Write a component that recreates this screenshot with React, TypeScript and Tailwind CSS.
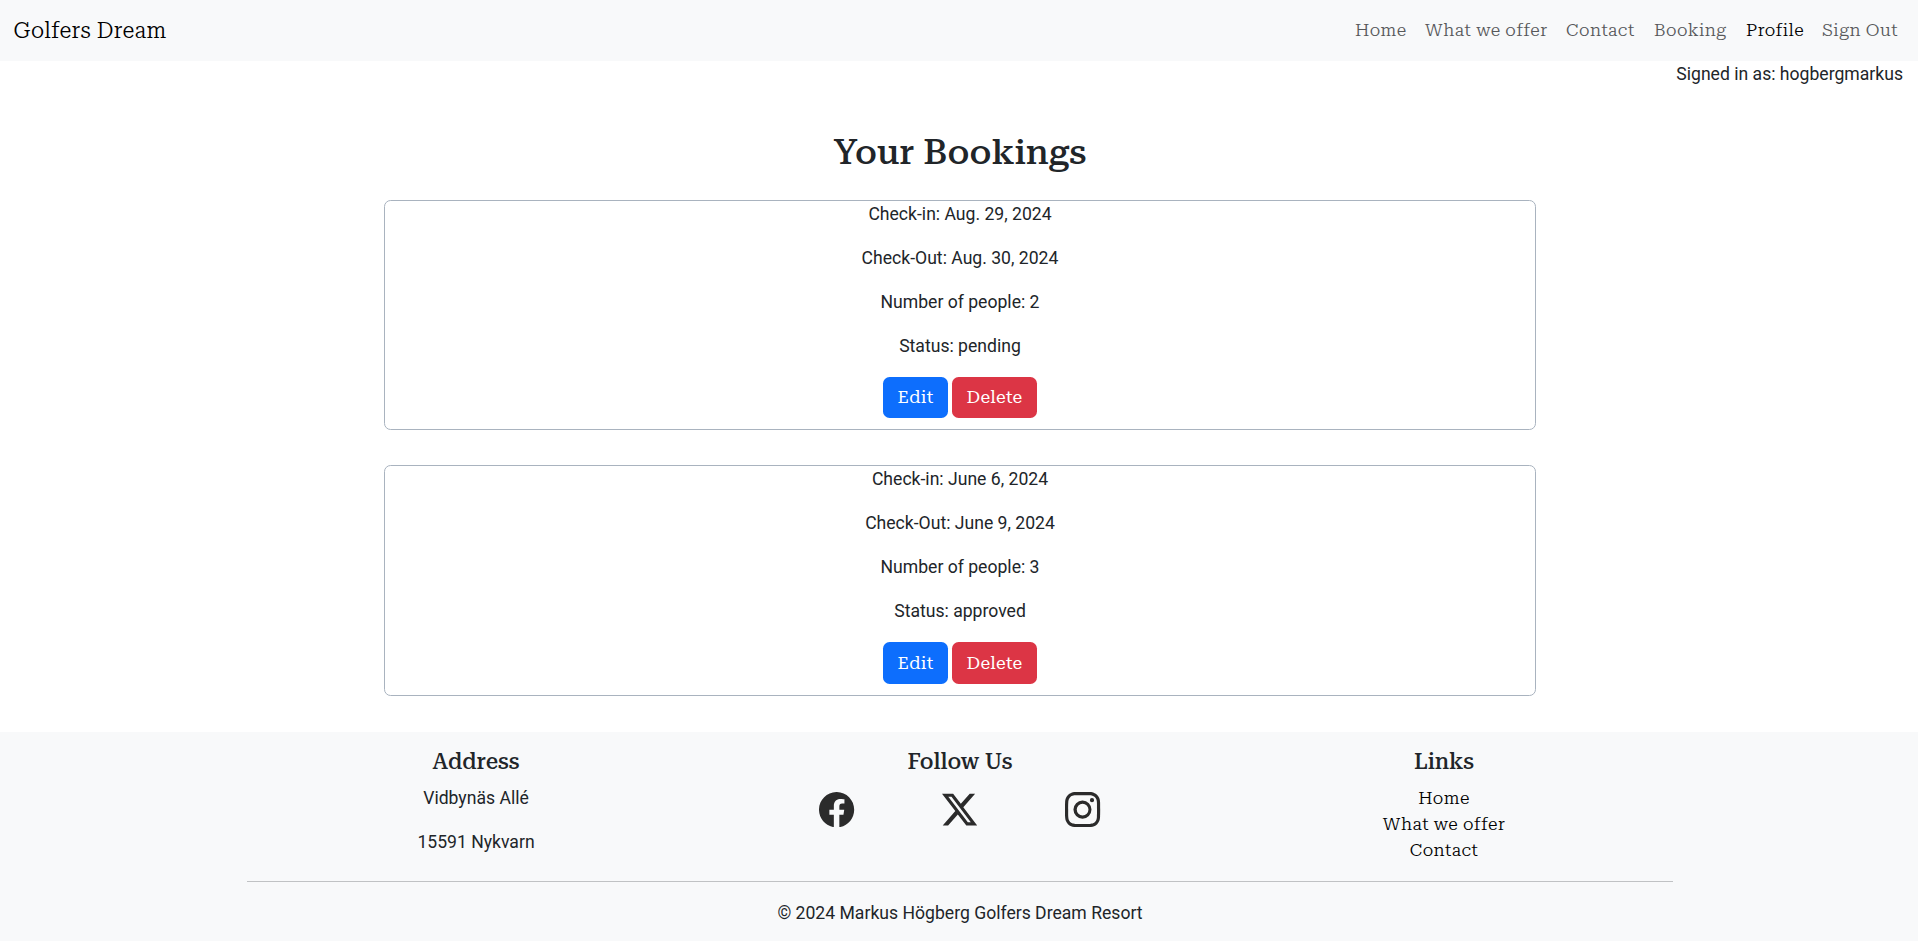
import React from "react";
import { BsFacebook, BsInstagram, BsTwitterX } from "react-icons/bs";

const serif = "font-['Roboto_Serif','Noto_Serif',serif]";
const heading = `${serif} font-medium`;

const navItems = [
  { label: "Home", width: "w-[52px]" },
  { label: "What we offer", width: "w-[123px]" },
  { label: "Contact", width: "w-[70px]" },
  { label: "Booking", width: "w-[74px]" },
  { label: "Profile", width: "w-[58px]", active: true },
  { label: "Sign Out", width: "w-[77px]" },
];

const bookings = [
  { checkIn: "Aug. 29, 2024", checkOut: "Aug. 30, 2024", people: 2, status: "pending" },
  { checkIn: "June 6, 2024", checkOut: "June 9, 2024", people: 3, status: "approved" },
];

function Booking({ booking }: { booking: (typeof bookings)[number] }) {
  return (
    <article className="mx-auto mb-[35.2px] w-[60%] rounded-[6.6px] border border-[#a9b3bf] pb-[11px] text-center">
      <p className="mb-[17.6px]">Check-in: {booking.checkIn}</p>
      <p className="mb-[17.6px]">Check-Out: {booking.checkOut}</p>
      <p className="mb-[17.6px]">Number of people: {booking.people}</p>
      <p className="mb-[17.6px]">Status: {booking.status}</p>
      <div className={`flex justify-center gap-1 tracking-[0.3px] text-white ${serif}`}>
        <button className="h-[41.4px] w-[65px] rounded-[6.6px] bg-[#0d6efd]">Edit</button>
        <button className="h-[41.4px] w-[85px] rounded-[6.6px] bg-[#dc3545]">Delete</button>
      </div>
    </article>
  );
}

export default function App() {
  return (
    <div className="h-[941px] overflow-hidden">
      <div className="flex h-full w-[1920px] flex-col bg-white font-[Roboto,sans-serif] text-[17.6px] leading-[26.4px] text-[#212529]">
        <nav className={`flex h-[61px] items-center justify-between bg-[#f8f9fa] pl-[13.4px] pr-[21px] font-light ${serif}`}>
          <a className="text-[22px] leading-[32px] tracking-[0.24px] text-black">Golfers Dream</a>
          <ul className="flex gap-[18px] tracking-[0.42px]">
            {navItems.map((item) => (
              <li key={item.label} className={`${item.width} whitespace-nowrap ${item.active ? "text-black" : "text-[#57585a]"}`}>
                {item.label}
              </li>
            ))}
          </ul>
        </nav>
        <p className="pr-[17px] text-right">Signed in as: hogbergmarkus</p>
        <main className="pt-[44px]">
          <h1 className={`mb-[26px] text-center text-[35.2px] leading-[42.2px] ${heading}`}>Your Bookings</h1>
          {bookings.map((b) => (
            <Booking key={b.checkIn} booking={b} />
          ))}
        </main>
        <footer className="mt-[1.4px] flex-1 bg-[#f8f9fa] pt-[17px] text-center">
          <div className="mx-auto grid w-[1452px] grid-cols-3">
            <section>
              <h5 className={`mb-[9.4px] text-[22px] leading-[26.4px] ${heading}`}>Address</h5>
              <p className="mb-[17.6px]">Vidbynäs Allé</p>
              <p className="mb-[17.6px]">15591 Nykvarn</p>
            </section>
            <section>
              <h5 className={`mb-[9.4px] text-[22px] leading-[26.4px] ${heading}`}>Follow Us</h5>
              <div className="flex justify-center gap-[87.8px] pt-[7px] text-[35.2px] text-[#2b2b2b]">
                <BsFacebook />
                <BsTwitterX />
                <BsInstagram />
              </div>
            </section>
            <section>
              <h5 className={`mb-[9.4px] text-[22px] leading-[26.4px] ${heading}`}>Links</h5>
              <ul className={`font-light leading-[26px] tracking-[0.42px] text-black ${serif}`}>
                <li>Home</li>
                <li>What we offer</li>
                <li>Contact</li>
              </ul>
            </section>
          </div>
          <hr className="mx-auto mb-[17.6px] mt-[8px] w-[1425.6px] border-[#c0c2c4]" />
          <p>© 2024 Markus Högberg Golfers Dream Resort</p>
        </footer>
      </div>
    </div>
  );
}
